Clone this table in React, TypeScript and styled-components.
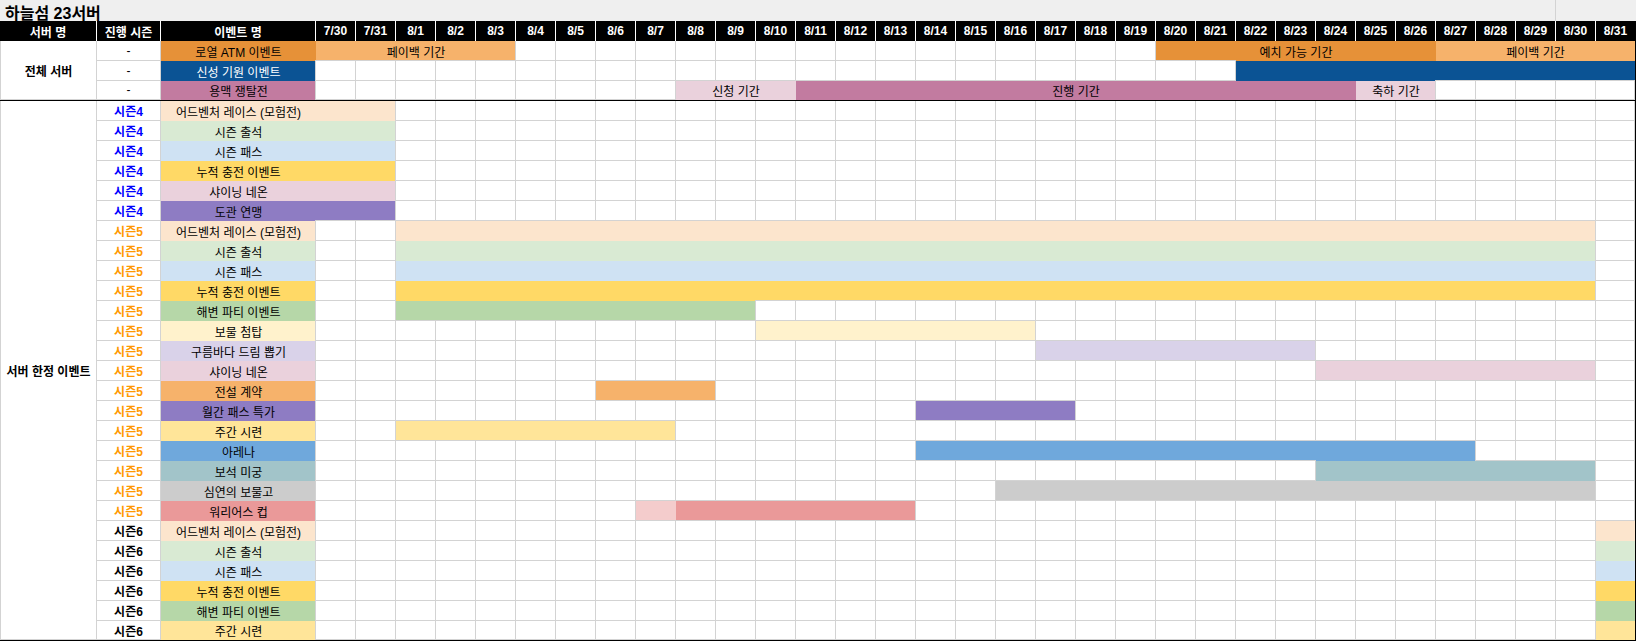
import React from "react";
import styled, { createGlobalStyle } from "styled-components";

const GlobalStyle = createGlobalStyle`
  html, body {
    margin: 0;
    padding: 0;
    background: #ffffff;
  }
  body {
    font-family: "Liberation Sans", "Noto Sans CJK KR", sans-serif;
  }
`;

const GRID_LINE = "#d3d3d3";
const COLUMNS = "97px 64px 155px repeat(32, 40px) 39px";

// 7/30 .. 8/31
const DAYS = ["7/30", "7/31", ...Array.from({ length: 31 }, (_, i) => `8/${i + 1}`)];
const dayIndex = (d: string) => DAYS.indexOf(d);

type Span = { from: string; to: string; color: string; label?: string };

type EventRow = {
  season: string;
  seasonColor: string;
  name: string;
  color: string;
  textColor?: string;
  bars: Span[];
};

const S4 = "#0000ff";
const S5 = "#ff9900";
const S6 = "#000000";

const globalRows: EventRow[] = [
  {
    season: "-",
    seasonColor: "#000",
    name: "로열 ATM 이벤트",
    color: "#e69138",
    bars: [
      { from: "7/30", to: "8/3", color: "#f6b26b", label: "페이백 기간" },
      { from: "8/20", to: "8/26", color: "#e69138", label: "예치 가능 기간" },
      { from: "8/27", to: "8/31", color: "#f6b26b", label: "페이백 기간" },
    ],
  },
  {
    season: "-",
    seasonColor: "#000",
    name: "신성 기원 이벤트",
    color: "#0b5394",
    textColor: "#ffffff",
    bars: [{ from: "8/22", to: "8/31", color: "#0b5394" }],
  },
  {
    season: "-",
    seasonColor: "#000",
    name: "용맥 쟁탈전",
    color: "#c27ba0",
    bars: [
      { from: "8/8", to: "8/10", color: "#ead1dc", label: "신청 기간" },
      { from: "8/11", to: "8/24", color: "#c27ba0", label: "진행 기간" },
      { from: "8/25", to: "8/26", color: "#ead1dc", label: "축하 기간" },
    ],
  },
];

const s4 = (name: string, color: string): EventRow => ({
  season: "시즌4",
  seasonColor: S4,
  name,
  color,
  bars: [{ from: "7/30", to: "7/31", color }],
});

const s5 = (name: string, color: string, bars: Span[]): EventRow => ({
  season: "시즌5",
  seasonColor: S5,
  name,
  color,
  bars,
});

const s6 = (name: string, color: string): EventRow => ({
  season: "시즌6",
  seasonColor: S6,
  name,
  color,
  bars: [{ from: "8/31", to: "8/31", color }],
});

const seasonRows: EventRow[] = [
  s4("어드벤처 레이스 (모험전)", "#fce5cd"),
  s4("시즌 출석", "#d9ead3"),
  s4("시즌 패스", "#cfe2f3"),
  s4("누적 충전 이벤트", "#ffd966"),
  s4("샤이닝 네온", "#ead1dc"),
  s4("도관 연맹", "#8e7cc3"),
  s5("어드벤처 레이스 (모험전)", "#fce5cd", [{ from: "8/1", to: "8/30", color: "#fce5cd" }]),
  s5("시즌 출석", "#d9ead3", [{ from: "8/1", to: "8/30", color: "#d9ead3" }]),
  s5("시즌 패스", "#cfe2f3", [{ from: "8/1", to: "8/30", color: "#cfe2f3" }]),
  s5("누적 충전 이벤트", "#ffd966", [{ from: "8/1", to: "8/30", color: "#ffd966" }]),
  s5("해변 파티 이벤트", "#b6d7a8", [{ from: "8/1", to: "8/9", color: "#b6d7a8" }]),
  s5("보물 첨탑", "#fff2cc", [{ from: "8/10", to: "8/16", color: "#fff2cc" }]),
  s5("구름바다 드림 뽑기", "#d9d2e9", [{ from: "8/17", to: "8/23", color: "#d9d2e9" }]),
  s5("샤이닝 네온", "#ead1dc", [{ from: "8/24", to: "8/30", color: "#ead1dc" }]),
  s5("전설 계약", "#f6b26b", [{ from: "8/6", to: "8/8", color: "#f6b26b" }]),
  s5("월간 패스 특가", "#8e7cc3", [{ from: "8/14", to: "8/17", color: "#8e7cc3" }]),
  s5("주간 시련", "#ffe599", [{ from: "8/1", to: "8/7", color: "#ffe599" }]),
  s5("아레나", "#6fa8dc", [{ from: "8/14", to: "8/27", color: "#6fa8dc" }]),
  s5("보석 미궁", "#a2c4c9", [{ from: "8/24", to: "8/30", color: "#a2c4c9" }]),
  s5("심연의 보물고", "#cccccc", [{ from: "8/16", to: "8/30", color: "#cccccc" }]),
  s5("워리어스 컵", "#ea9999", [
    { from: "8/7", to: "8/7", color: "#f4cccc" },
    { from: "8/8", to: "8/13", color: "#ea9999" },
  ]),
  s6("어드벤처 레이스 (모험전)", "#fce5cd"),
  s6("시즌 출석", "#d9ead3"),
  s6("시즌 패스", "#cfe2f3"),
  s6("누적 충전 이벤트", "#ffd966"),
  s6("해변 파티 이벤트", "#b6d7a8"),
  s6("주간 시련", "#ffe599"),
];

const Sheet = styled.div`
  width: 1636px;
  font-family: "Liberation Sans", "Noto Sans CJK KR", sans-serif;
  font-size: 12px;
  color: #000;
`;

const TitleBar = styled.div`
  display: grid;
  grid-template-columns: 1556px 80px;
  height: 21px;
  background: #efefef;
`;

const TitleCell = styled.div<{ $divider?: boolean }>`
  display: flex;
  align-items: center;
  padding-left: 5px;
  border-right: ${(p) => (p.$divider ? `1px solid ${GRID_LINE}` : "none")};
  font-size: 16px;
  font-weight: bold;
  white-space: nowrap;
`;

const HeaderRow = styled.div`
  display: grid;
  grid-template-columns: 97px 64px 155px repeat(33, 40px);
  height: 20px;
  background: #000;
`;

const HeaderCell = styled.div<{ $last?: boolean }>`
  display: flex;
  align-items: center;
  justify-content: center;
  border-right: 1px solid ${(p) => (p.$last ? "#000" : "#fff")};
  color: #fff;
  font-weight: bold;
  white-space: nowrap;
`;

const Section = styled.div<{ $rows: string }>`
  display: grid;
  grid-template-columns: ${COLUMNS};
  grid-template-rows: ${(p) => p.$rows};
  border-right: 1px solid #000;
  border-bottom: 1px solid #000;
  overflow: hidden;
`;

// plain sheet cell: draws its gridlines on all four sides, overlapping the neighbour's edge
const Cell = styled.div`
  margin: -1px 0 0 -1px;
  border: 1px solid ${GRID_LINE};
  background: #fff;
  display: flex;
  align-items: center;
  justify-content: center;
  white-space: nowrap;
  min-width: 0;
`;

const GroupLabel = styled(Cell)`
  grid-column: 1;
  grid-row: 1 / -1;
  margin-left: 0;
  font-weight: bold;
`;

const SeasonCell = styled(Cell)<{ $color: string; $bold: boolean }>`
  color: ${(p) => p.$color};
  font-weight: ${(p) => (p.$bold ? "bold" : "normal")};
`;

const EventCell = styled.div<{ $bg: string; $fg?: string }>`
  background: ${(p) => p.$bg};
  color: ${(p) => p.$fg ?? "#000"};
  display: flex;
  align-items: center;
  justify-content: center;
  white-space: nowrap;
`;

const Bar = styled.div<{ $bg: string; $span: number }>`
  grid-column: span ${(p) => p.$span};
  background: ${(p) => p.$bg};
  display: flex;
  align-items: center;
  justify-content: center;
  white-space: nowrap;
`;

function DateCells({ bars }: { bars: Span[] }) {
  const out: React.ReactNode[] = [];
  let i = 0;
  while (i < DAYS.length) {
    const bar = bars.find((b) => dayIndex(b.from) === i);
    if (bar) {
      const end = dayIndex(bar.to);
      out.push(
        <Bar key={i} $bg={bar.color} $span={end - i + 1}>
          {bar.label}
        </Bar>
      );
      i = end + 1;
    } else {
      out.push(<Cell key={i} />);
      i++;
    }
  }
  return <>{out}</>;
}

function Row({ row }: { row: EventRow }) {
  return (
    <>
      <SeasonCell $color={row.seasonColor} $bold={row.season !== "-"}>
        {row.season}
      </SeasonCell>
      <EventCell $bg={row.color} $fg={row.textColor}>
        {row.name}
      </EventCell>
      <DateCells bars={row.bars} />
    </>
  );
}

export default function App() {
  return (
    <>
      <GlobalStyle />
      <Sheet>
        <TitleBar>
          <TitleCell $divider>하늘섬 23서버</TitleCell>
          <TitleCell />
        </TitleBar>

        <HeaderRow>
          <HeaderCell>서버 명</HeaderCell>
          <HeaderCell>진행 시즌</HeaderCell>
          <HeaderCell>이벤트 명</HeaderCell>
          {DAYS.map((d, i) => (
            <HeaderCell key={d} $last={i === DAYS.length - 1}>
              {d}
            </HeaderCell>
          ))}
        </HeaderRow>

        <Section $rows="20px 20px 19px">
          <GroupLabel>전체 서버</GroupLabel>
          {globalRows.map((r) => (
            <Row key={r.name} row={r} />
          ))}
        </Section>

        <Section $rows="repeat(26, 20px) 19px">
          <GroupLabel>서버 한정 이벤트</GroupLabel>
          {seasonRows.map((r, i) => (
            <Row key={i} row={r} />
          ))}
        </Section>
      </Sheet>
    </>
  );
}
